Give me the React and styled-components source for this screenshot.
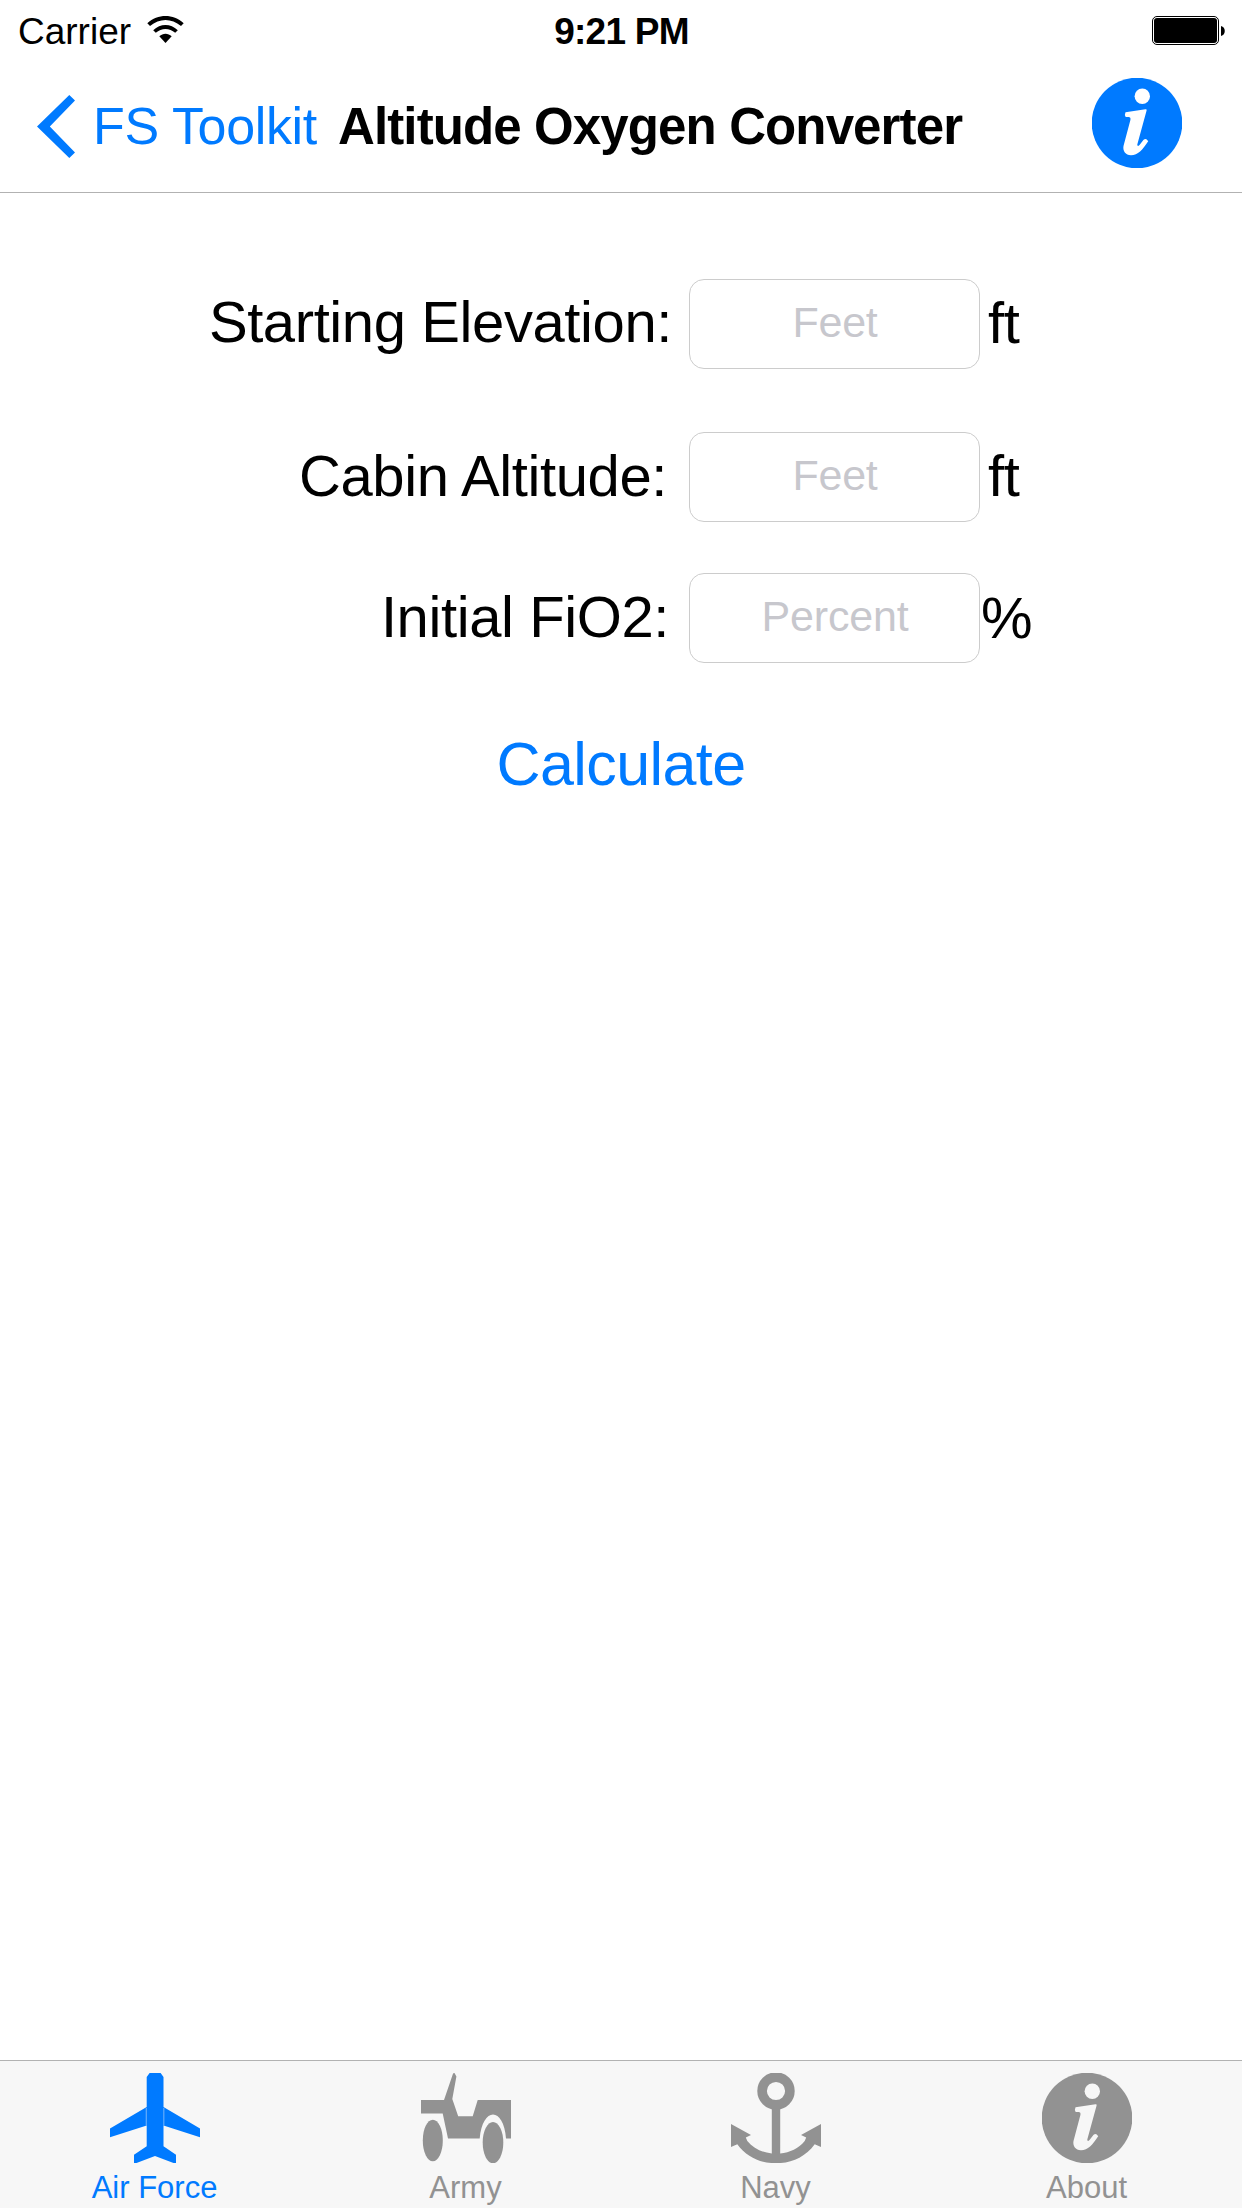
import React from "react";
import styled, { createGlobalStyle } from "styled-components";

const BLUE = "#007aff";
const GRAY = "#929292";

const GlobalStyle = createGlobalStyle`
  * { box-sizing: border-box; }
  body { margin: 0; background: #fff; }
`;

const Screen = styled.div`
  display: flex;
  flex-direction: column;
  width: 1242px;
  height: 2208px;
  overflow: hidden;
  background: #fff;
  color: #000;
  font-family: "Liberation Sans", Arial, sans-serif;
  svg { display: block; flex: none; }
`;

const StatusBar = styled.header`
  display: grid;
  grid-template-columns: 1fr auto 1fr;
  align-items: center;
  height: 62px;
  padding: 2px 17px 0 18px;
  font-size: 37px;
  line-height: 42px;
`;

const Carrier = styled.div`
  display: flex;
  align-items: center;
  gap: 16px;
  svg { margin-bottom: 4px; }
`;

const Clock = styled.time`
  font-weight: 700;
  letter-spacing: -0.75px;
`;

const Battery = styled.div`
  justify-self: end;
  margin-bottom: 3px;
`;

const NavBar = styled.nav`
  display: flex;
  align-items: center;
  height: 131px;
  padding: 0 60px 2px 37px;
  border-bottom: 1px solid #b2b2b2;
  font-size: 52px;
  line-height: 60px;
  white-space: nowrap;
`;

const BackButton = styled.a`
  display: flex;
  align-items: center;
  gap: 18px;
  width: 301px;
  color: ${BLUE};
  letter-spacing: -0.35px;
  svg { margin-top: 1px; }
`;

const Title = styled.h1`
  flex: 1;
  margin: 2px 0 0;
  font-size: 51px;
  font-weight: 700;
  letter-spacing: -0.88px;
`;

const InfoButton = styled.div`
  margin-bottom: 6px;
`;

const Form = styled.main`
  flex: 1;
  display: flex;
  flex-direction: column;
  padding-top: 86px;
`;

const Row = styled.div`
  display: grid;
  grid-template-columns: 689px 291px auto;
  align-items: center;
  height: 90px;
  margin-bottom: ${(p) => p.$after}px;
  font-size: 58px;
  line-height: 66px;
  letter-spacing: -0.4px;
`;

const Label = styled.label`
  padding-right: ${(p) => p.$gap}px;
  padding-bottom: ${(p) => p.$lift}px;
  text-align: right;
`;

const Field = styled.input`
  width: 291px;
  height: 90px;
  margin: 0;
  padding: 0 0 4px 1px;
  border: 1px solid #ccc;
  border-radius: 15px;
  background: #fff;
  outline: none;
  text-align: center;
  font-family: inherit;
  font-size: 43px;
  letter-spacing: -0.2px;
  &::placeholder { color: #c7c7cd; opacity: 1; }
`;

const Unit = styled.span`
  padding-left: ${(p) => p.$gap}px;
  padding-bottom: ${(p) => p.$lift}px;
`;

const Calculate = styled.button`
  align-self: center;
  height: 60px;
  margin-top: 71px;
  padding: 0;
  border: 0;
  background: none;
  color: ${BLUE};
  font-family: inherit;
  font-size: 61px;
  line-height: 60px;
  letter-spacing: -0.6px;
`;

const TabBar = styled.footer`
  display: grid;
  grid-template-columns: 310px 312px 308px 312px;
  height: 148px;
  padding-top: 12px;
  border-top: 1px solid #b2b2b2;
  background: #f7f7f7;
`;

const Tab = styled.div`
  display: flex;
  flex-direction: column;
  align-items: center;
  gap: 7px;
  color: ${(p) => (p.$active ? BLUE : GRAY)};
  font-size: 31px;
  line-height: 36px;
  &:last-child { padding-left: 2px; }
`;

const TabLabel = styled.span`
  padding-right: 1px;
`;

const WifiIcon = () => (
  <svg width="37" height="28" viewBox="0 0 37 28">
    <path d="M.3 7.3C11-2.4 26-2.4 36.7 7.3L34 10C24.5 1.9 12.5 1.9 3 10Z" />
    <path d="M6.2 14.3C13.5 7.2 23.5 7.2 30.8 14.3L28.2 16.8C22.5 11.7 14.5 11.7 8.8 16.8Z" />
    <path d="M12.3 20.3C16 16.8 21 16.8 24.7 20.3L18.5 27Z" />
  </svg>
);

const BatteryIcon = () => (
  <svg width="73" height="29" viewBox="0 0 73 29">
    <rect x=".5" y=".5" width="66" height="28" rx="4.5" fill="none" stroke="#000" />
    <rect x="2" y="2" width="63" height="25" rx="3" />
    <path d="M69 10C74 11 74 19 69 20Z" />
  </svg>
);

const ChevronIcon = () => (
  <svg width="38" height="63" viewBox="0 0 38 63" fill="currentColor">
    <path d="M32.3 0 38 5.5 12.8 31.5 38 57.5 32.3 63 0 31.5Z" />
  </svg>
);

const InfoIcon = ({ color, glyph }) => (
  <svg width="90" height="90" viewBox="0 0 90 90">
    <circle cx="45" cy="45" r="45.3" fill={color} />
    <circle cx="50.3" cy="18.3" r="7.7" fill={glyph} />
    <path
      fill={glyph}
      d="M33.5 34.3 53.5 31.2Q55 31 54.6 32.6L45.3 66.5Q45.3 69 47.5 67L51.6 61.8Q54 59.5 56.2 63.3C50.5 72 46 77.2 39 77.2 33.5 77.2 30.6 73 31.5 68L38.4 42Q39 39.2 36.5 39L33.7 38.9Q32.3 36.6 33.5 34.3Z"
    />
  </svg>
);

const PlaneIcon = () => (
  <svg width="90" height="90" viewBox="0 0 90 90" fill="currentColor">
    <path d="M39.6 0H50.6L53.5 4V34L90 55.5V64.3L53.5 52.5V73.3L66 81.7V90H63.5L45 83 26.5 90H24V81.7L36.7 73.3V52.5L0 64.3V55.5L36.7 34V4Z" />
    <path d="M36.3 35V52.4M53.8 35V52.4" stroke="#f7f7f7" strokeOpacity=".4" strokeWidth="1.2" />
  </svg>
);

const JeepIcon = () => (
  <svg width="90" height="90" viewBox="0 0 90 90" fill="currentColor">
    <path d="M0 27H23L31.8 1.2Q32 0 33.5 0L35.4 3.5 31.3 26 37.2 43.3H51.7L56.7 27H90V65.5H85C84 50 78 41.5 72 41.5 66 41.5 60 50 58.7 65.5H27L21.7 40.5H0Z" />
    <ellipse cx="11.8" cy="67.5" rx="10" ry="20.7" />
    <ellipse cx="72" cy="69.6" rx="10.3" ry="20.7" />
  </svg>
);

const AnchorIcon = () => (
  <svg width="90" height="90" viewBox="0 0 90 90" fill="currentColor">
    <circle cx="45" cy="18" r="13.9" fill="none" stroke="currentColor" strokeWidth="9.6" />
    <path d="M40.8 34H49.2V80.4C59 79.5 67.5 75.5 73.7 68L75.2 64.6 70 62 90 51V74L83.7 71.2C74 84.5 60 90.2 45 90.2S16 84.5 6.3 71.2L0 74V51L20 62 14.8 64.6 16.3 68C22.5 75.5 31 79.5 40.8 80.4Z" />
  </svg>
);

const ROWS = [
  { id: "elevation", label: "Starting Elevation:", hint: "Feet", unit: "ft", gap: 17, lift: 4, unitGap: 8, unitLift: 2, after: 63 },
  { id: "cabin", label: "Cabin Altitude:", hint: "Feet", unit: "ft", gap: 22, lift: 2, unitGap: 8, unitLift: 2, after: 51 },
  { id: "fio2", label: "Initial FiO2:", hint: "Percent", unit: "%", gap: 20, lift: 2, unitGap: 1, unitLift: 0, after: 0 },
];

export default function App() {
  return (
    <Screen>
      <GlobalStyle />
      <StatusBar>
        <Carrier>
          Carrier
          <WifiIcon />
        </Carrier>
        <Clock>9:21 PM</Clock>
        <Battery>
          <BatteryIcon />
        </Battery>
      </StatusBar>
      <NavBar>
        <BackButton>
          <ChevronIcon />
          FS Toolkit
        </BackButton>
        <Title>Altitude Oxygen Converter</Title>
        <InfoButton>
          <InfoIcon color={BLUE} glyph="#fff" />
        </InfoButton>
      </NavBar>
      <Form>
        {ROWS.map((r) => (
          <Row key={r.id} $after={r.after}>
            <Label htmlFor={r.id} $gap={r.gap} $lift={r.lift}>{r.label}</Label>
            <Field id={r.id} placeholder={r.hint} />
            <Unit $gap={r.unitGap} $lift={r.unitLift}>{r.unit}</Unit>
          </Row>
        ))}
        <Calculate>Calculate</Calculate>
      </Form>
      <TabBar>
        <Tab $active>
          <PlaneIcon />
          <TabLabel>Air Force</TabLabel>
        </Tab>
        <Tab>
          <JeepIcon />
          <TabLabel>Army</TabLabel>
        </Tab>
        <Tab>
          <AnchorIcon />
          <TabLabel>Navy</TabLabel>
        </Tab>
        <Tab>
          <InfoIcon color={GRAY} glyph="#f7f7f7" />
          <TabLabel>About</TabLabel>
        </Tab>
      </TabBar>
    </Screen>
  );
}
